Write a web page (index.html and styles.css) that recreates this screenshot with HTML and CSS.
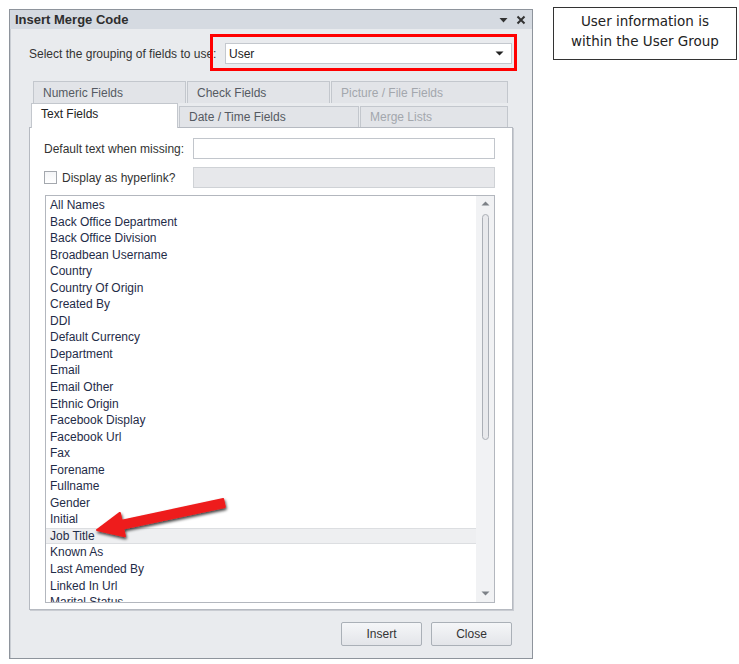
FILE: index.html
```html
<!DOCTYPE html>
<html>
<head>
<meta charset="utf-8">
<link rel="stylesheet" href="styles.css">
</head>
<body>
<div class="page">
  <div class="dialog">
    <div class="titlebar">
      <span class="title">Insert Merge Code</span>
      <span class="tb-icons">
        <svg width="9" height="6" viewBox="0 0 9 6"><path d="M0.5 1 L8.5 1 L4.5 5.5 Z" fill="#333"/></svg>
        <svg width="10" height="10" viewBox="0 0 10 10"><path d="M1.5 1.5 L8.5 8.5 M8.5 1.5 L1.5 8.5" stroke="#333" stroke-width="2"/></svg>
      </span>
    </div>
    <div class="content">
      <div class="group-row">
        <span class="lbl">Select the grouping of fields to use:</span>
        <div class="combo">
          <span>User</span>
          <svg width="9" height="5" viewBox="0 0 9 5"><path d="M0.5 0.5 L8.5 0.5 L4.5 4.5 Z" fill="#222"/></svg>
        </div>
      </div>
      <div class="tabs">
        <div class="tabrow back">
          <div class="tab w1">Numeric Fields</div>
          <div class="tab w2">Check Fields</div>
          <div class="tab w3 disabled">Picture / File Fields</div>
        </div>
        <div class="tabrow front">
          <div class="tab w4 active">Text Fields</div>
          <div class="tab w5">Date / Time Fields</div>
          <div class="tab w6 disabled">Merge Lists</div>
        </div>
      </div>
      <div class="panel">
        <div class="field-row">
          <span class="flabel">Default text when missing:</span>
          <div class="input"></div>
        </div>
        <div class="field-row">
          <span class="flabel check"><span class="checkbox"></span>Display as hyperlink?</span>
          <div class="input disabled-input"></div>
        </div>
        <div class="listbox">
          <div class="items">
            <div class="item">All Names</div>
            <div class="item">Back Office Department</div>
            <div class="item">Back Office Division</div>
            <div class="item">Broadbean Username</div>
            <div class="item">Country</div>
            <div class="item">Country Of Origin</div>
            <div class="item">Created By</div>
            <div class="item">DDI</div>
            <div class="item">Default Currency</div>
            <div class="item">Department</div>
            <div class="item">Email</div>
            <div class="item">Email Other</div>
            <div class="item">Ethnic Origin</div>
            <div class="item">Facebook Display</div>
            <div class="item">Facebook Url</div>
            <div class="item">Fax</div>
            <div class="item">Forename</div>
            <div class="item">Fullname</div>
            <div class="item">Gender</div>
            <div class="item">Initial</div>
            <div class="item selected">Job Title</div>
            <div class="item">Known As</div>
            <div class="item">Last Amended By</div>
            <div class="item">Linked In Url</div>
            <div class="item">Marital Status</div>
          </div>
          <div class="scrollbar">
            <svg class="sb-arrow" width="9" height="5" viewBox="0 0 9 5"><path d="M0.5 4.5 L8.5 4.5 L4.5 0.5 Z" fill="#7d8187"/></svg>
            <div class="sb-track"><div class="thumb"></div></div>
            <svg class="sb-arrow" width="9" height="5" viewBox="0 0 9 5"><path d="M0.5 0.5 L8.5 0.5 L4.5 4.5 Z" fill="#7d8187"/></svg>
          </div>
        </div>
      </div>
      <div class="buttons">
        <div class="btn">Insert</div>
        <div class="btn">Close</div>
      </div>
    </div>
  </div>
  <div class="note">User information is<br>within the User Group</div>
</div>
<svg class="arrow" width="739" height="664" viewBox="0 0 739 664">
  <defs>
    <filter id="sh" x="-20%" y="-50%" width="140%" height="200%">
      <feDropShadow dx="1" dy="2" stdDeviation="1.5" flood-color="#000" flood-opacity="0.75"/>
    </filter>
  </defs>
  <polygon filter="url(#sh)" points="223.2,499.1 121.6,520.7 119.9,512.9 97,530 124.9,536.3 123.2,528.5 224.8,506.9" fill="#ee1c1c" stroke="#ee1c1c" stroke-width="2" stroke-linejoin="round"/>
</svg>
</body>
</html>
```
FILE: styles.css
```css
* { box-sizing: border-box; }
body {
  margin: 0;
  background: #fff;
  font-family: "Liberation Sans", Arial, sans-serif;
  font-size: 12px;
  color: #333;
}
.page {
  display: flex;
  align-items: flex-start;
  padding: 9px 0 0 9px;
}
.dialog {
  width: 524px;
  height: 650px;
  border: 1px solid #8e949c;
  background: #e9ebee;
  display: flex;
  flex-direction: column;
  box-shadow: inset 1px 0 0 #c9cdd3;
}
.titlebar {
  height: 19px;
  background: #d5dae1;
  display: flex;
  align-items: center;
  justify-content: space-between;
  padding: 0 6px 0 5px;
}
.title {
  font-weight: bold;
  color: #2e2e2e;
  font-size: 13px;
}
.tb-icons {
  display: flex;
  align-items: center;
  gap: 8px;
}
.content {
  flex: 1;
  display: flex;
  flex-direction: column;
  padding: 14px 19px 0 19px;
}
.group-row {
  display: flex;
  align-items: center;
  height: 21px;
}
.lbl {
  width: 196px;
  color: #333;
}
.combo {
  position: relative;
  width: 287px;
  height: 21px;
  background: #fff;
  border: 1px solid #c4c8ce;
  display: flex;
  align-items: center;
  justify-content: space-between;
  padding: 0 7px 0 3px;
  color: #222;
}
.combo::after {
  content: "";
  position: absolute;
  left: -16px;
  right: -6px;
  top: -10px;
  bottom: -8px;
  border: 3px solid #f00;
}
.tabs {
  margin-top: 17px;
  display: flex;
  flex-direction: column;
}
.tabrow {
  display: flex;
}
.tabrow.back {
  height: 22px;
  margin-left: 4px;
}
.tabrow.front {
  height: 24px;
  margin-left: 2px;
  align-items: flex-end;
  position: relative;
  z-index: 2;
}
.tab {
  height: 22px;
  background: #e2e4e8;
  border: 1px solid #c3c7cd;
  border-bottom: none;
  display: flex;
  align-items: center;
  padding-left: 9px;
  color: #555a62;
  margin-right: 1px;
}
.tabrow.front .tab { height: 21px; }
.tabrow.front .tab.active {
  height: 25px;
  margin-bottom: -1px;
  background: #fff;
  color: #222;
  padding-bottom: 4px;
}
.tab.disabled { color: #a3a7ad; }
.w1 { width: 153px; }
.w2 { width: 143px; }
.w3 { width: 177px; }
.w4 { width: 147px; }
.w5 { width: 180px; }
.w6 { width: 148px; }
.panel {
  height: 483px;
  background: #fff;
  border: 1px solid #b6bac1;
  box-shadow: 1px 1px 0 #c9ccd2;
  padding: 10px 17px 0 14px;
  display: flex;
  flex-direction: column;
}
.field-row {
  display: flex;
  align-items: center;
  height: 21px;
  margin-bottom: 8px;
}
.field-row + .field-row { margin-bottom: 7px; }
.flabel {
  width: 149px;
  color: #333;
  display: flex;
  align-items: center;
}
.checkbox {
  width: 13px;
  height: 13px;
  border: 1px solid #a4a8ae;
  background: linear-gradient(#f4f5f7, #fff);
  margin-right: 5px;
}
.input {
  flex: 1;
  height: 21px;
  border: 1px solid #c2c6cc;
  background: #fff;
}
.disabled-input {
  background: #e7e8eb;
  border-color: #cfd2d6;
}
.listbox {
  height: 408px;
  margin-left: 1px;
  border: 1px solid #b3b7be;
  display: flex;
  overflow: hidden;
}
.items {
  flex: 1;
  padding-top: 1px;
  overflow: hidden;
}
.item {
  height: 16.55px;
  line-height: 16px;
  padding-left: 4px;
  color: #1f2c48;
  white-space: nowrap;
}
.item.selected {
  background: #eeeff1;
  border-top: 1px solid #dcdee1;
  border-bottom: 1px solid #dcdee1;
  line-height: 14px;
}
.scrollbar {
  width: 18px;
  background: #f1f2f4;
  display: flex;
  flex-direction: column;
  align-items: center;
  padding: 5px 0 6px;
}
.sb-track {
  flex: 1;
  width: 100%;
  display: flex;
  justify-content: center;
  padding-top: 8px;
}
.thumb {
  width: 7px;
  height: 226px;
  border: 1px solid #abafb6;
  border-radius: 4px;
  background: #e8e9ec;
}
.buttons {
  margin-top: 12px;
  display: flex;
  justify-content: flex-end;
  gap: 9px;
  padding-right: 1px;
}
.btn {
  width: 81px;
  height: 24px;
  border: 1px solid #aab0b7;
  border-radius: 2px;
  background: linear-gradient(#f5f6f8, #e3e5e9);
  display: flex;
  align-items: center;
  justify-content: center;
  color: #333;
}
.note {
  margin-left: 20px;
  margin-top: -2px;
  width: 184px;
  height: 53px;
  border: 1px solid #333;
  display: flex;
  align-items: center;
  justify-content: center;
  text-align: center;
  font-family: "DejaVu Sans", sans-serif;
  font-size: 13.5px;
  line-height: 20px;
  padding-bottom: 5px;
  color: #222;
}
.arrow {
  position: absolute;
  left: 0;
  top: 0;
  pointer-events: none;
}
```
